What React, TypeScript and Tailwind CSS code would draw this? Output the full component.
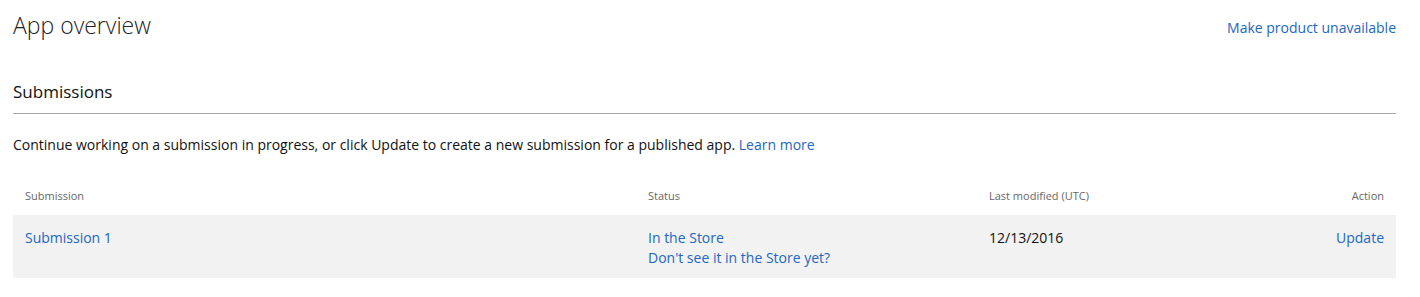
import React from "react";

const font = { fontFamily: '"Open Sans", "Noto Sans", sans-serif' };

export default function App() {
  return (
    <div className="w-[1420px] h-[297px] bg-white text-[#111]" style={font}>
      <div className="pl-[13px] pr-[24px]">
        <div className="flex items-start justify-between pt-[9px]">
          <h1 className="text-[23px] font-light leading-[32px] text-[#222]">App overview</h1>
          <a className="text-[14px] leading-[20px] mt-[9px] text-[#2266c3]">Make product unavailable</a>
        </div>
        <h2 className="mt-[39px] text-[17px] leading-[24px] text-[#111]">Submissions</h2>
        <div className="mt-[9px] h-px bg-[#a6a6a6]" />
        <p className="mt-[21px] text-[14px] leading-[20px]">
          Continue working on a submission in progress, or click Update to create a new submission for a published app.{" "}
          <a className="text-[#2266c3]">Learn more</a>
        </p>
        <div className="mt-[34px] grid grid-cols-[623px_341px_1fr_auto] px-[12px] text-[11px] leading-[14px] text-[#666]">
          <div>Submission</div>
          <div>Status</div>
          <div>Last modified (UTC)</div>
          <div className="text-right">Action</div>
        </div>
        <div className="mt-[12px] grid grid-cols-[623px_341px_1fr_auto] px-[12px] pt-[13px] pb-[10px] bg-[#f2f2f2] text-[14px] leading-[20px]">
          <a className="text-[#2266c3]">Submission 1</a>
          <div className="flex flex-col">
            <a className="text-[#2266c3]">In the Store</a>
            <a className="text-[#2266c3]">Don't see it in the Store yet?</a>
          </div>
          <div className="text-[#111]">12/13/2016</div>
          <a className="text-right text-[#2266c3]">Update</a>
        </div>
      </div>
    </div>
  );
}
